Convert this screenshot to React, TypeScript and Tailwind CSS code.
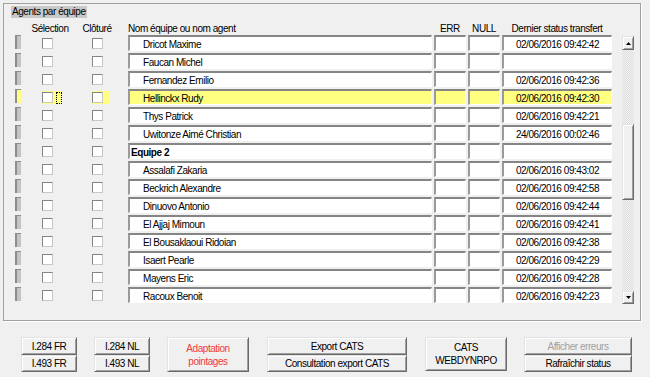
const rows: { name: string; date: string; team?: boolean; selected?: boolean }[] = [
  { name: "Dricot Maxime", date: "02/06/2016 09:42:42" },
  { name: "Faucan Michel", date: "" },
  { name: "Fernandez Emilio", date: "02/06/2016 09:42:36" },
  { name: "Hellinckx Rudy", date: "02/06/2016 09:42:30", selected: true },
  { name: "Thys Patrick", date: "02/06/2016 09:42:21" },
  { name: "Uwitonze Aimé Christian", date: "24/06/2016 00:02:46" },
  { name: "Equipe 2", date: "", team: true },
  { name: "Assalafi Zakaria", date: "02/06/2016 09:43:02" },
  { name: "Beckrich Alexandre", date: "02/06/2016 09:42:58" },
  { name: "Dinuovo Antonio", date: "02/06/2016 09:42:44" },
  { name: "El Ajjaj Mimoun", date: "02/06/2016 09:42:41" },
  { name: "El Bousaklaoui Ridoian", date: "02/06/2016 09:42:38" },
  { name: "Isaert Pearle", date: "02/06/2016 09:42:29" },
  { name: "Mayens Eric", date: "02/06/2016 09:42:28" },
  { name: "Racoux Benoit", date: "02/06/2016 09:42:23" },
];

const sunken =
  "h-[16px] pt-[1px] border-t-2 border-l-2 border-t-[#858585] border-l-[#9a9a9a] border-b border-r border-b-white border-r-white flex items-center";
const raised =
  "border border-t-[#e3e3e3] border-l-[#e3e3e3] border-b-[#696969] border-r-[#696969] shadow-[inset_1px_1px_0_#ffffff,inset_-1px_-1px_0_#a0a0a0] bg-[#f0f0f0]";

function Checkbox() {
  return (
    <div className="w-[11px] h-[11px] bg-white border border-t-[#858585] border-l-[#858585] border-b-[#c8c8c8] border-r-[#c8c8c8]" />
  );
}

function Row({ name, date, team, selected }: (typeof rows)[number]) {
  const fill = selected ? "bg-[#ffff80]" : "bg-white";
  return (
    <div className="flex h-[18px]">
      <div
        className={`ml-[11px] w-[6px] h-[14px] border-l-2 border-t border-[#8c8c8c] ${
          selected ? "bg-[#ffff80]" : "bg-[#c4c4c4]"
        }`}
      />
      <div className={`ml-[21px] mt-[2px] w-[20px] h-[13px] flex items-center ${selected ? "bg-[#ffff80]" : ""}`}>
        <Checkbox />
        {selected && <div className="ml-[3px] w-[6px] h-[12px] border border-dotted border-black" />}
      </div>
      <div className={`ml-[30px] mt-[2px] w-[18px] h-[13px] flex items-center ${selected ? "bg-[#ffff80]" : ""}`}>
        <Checkbox />
      </div>
      <div className={`ml-[18px] w-[304px] ${sunken} ${fill}`}>
        <span className={team ? "pl-[1px] font-bold" : "pl-[13px]"}>{name}</span>
      </div>
      <div className={`ml-[2px] w-[32px] ${sunken} ${fill}`} />
      <div className={`ml-[2px] w-[32px] ${sunken} ${fill}`} />
      <div className={`ml-[2px] w-[110px] justify-center ${sunken} ${fill}`}>{date}</div>
    </div>
  );
}

function Arrow({ down }: { down?: boolean }) {
  return (
    <svg width="5" height="3" viewBox="0 0 5 3" className={down ? "rotate-180" : ""}>
      <path d="M2.5 0 L5 3 L0 3 Z" fill="#000" />
    </svg>
  );
}

function Scrollbar() {
  return (
    <div className="ml-[10px] mt-[1px] w-[12px] h-[268px] flex flex-col">
      <div className={`h-[14px] flex items-center justify-center ${raised}`}>
        <Arrow />
      </div>
      <div className="flex-1 flex flex-col bg-[repeating-conic-gradient(#f4f4f4_0%_25%,#dcdcdc_0%_50%)] bg-[length:2px_2px]">
        <div className="h-[74px]" />
        <div className={`h-[76px] ${raised}`} />
      </div>
      <div className={`h-[13px] flex items-center justify-center ${raised}`}>
        <Arrow down />
      </div>
    </div>
  );
}

function Btn({ className, children }: { className?: string; children: React.ReactNode }) {
  return (
    <div className={`flex items-center justify-center text-center leading-[13px] ${raised} ${className ?? ""}`}>
      {children}
    </div>
  );
}

export default function App() {
  return (
    <div className="w-[650px] h-[377px] bg-[#f0f0f0] text-black text-[10px] tracking-[-0.45px] font-['Liberation_Sans',Arial,sans-serif] overflow-hidden pt-[3px]">
      <div className="ml-[3px] w-[638px] h-[318px] border border-[#a0a0a0] shadow-[1px_1px_0_#ffffff]">
        <div className="ml-[7px] mt-[2px] w-fit h-[12px] leading-[12px] px-[1px] bg-[#c9c9c9]">Agents par équipe</div>
        <div className="mt-[5px] h-[12px] leading-[12px] flex whitespace-nowrap">
          <div className="ml-[26px] w-[40px] text-center">Sélection</div>
          <div className="ml-[12px] w-[30px] text-center">Clôturé</div>
          <div className="ml-[16px] w-[304px]">Nom équipe ou nom agent</div>
          <div className="ml-[2px] w-[32px] text-center">ERR</div>
          <div className="ml-[2px] w-[32px] text-center">NULL</div>
          <div className="ml-[2px] w-[110px] text-center">Dernier status transfert</div>
        </div>
        <div className="flex">
          <div className="flex flex-col">
            {rows.map((r) => (
              <Row key={r.name} {...r} />
            ))}
          </div>
          <Scrollbar />
        </div>
      </div>

      <div className="mt-[16px] pl-[21px] flex items-start">
        <div className="w-[56px] flex flex-col">
          <Btn className="h-[18px]">I.284 FR</Btn>
          <Btn className="h-[17px]">I.493 FR</Btn>
        </div>
        <div className="ml-[17px] w-[56px] flex flex-col">
          <Btn className="h-[18px]">I.284 NL</Btn>
          <Btn className="h-[17px]">I.493 NL</Btn>
        </div>
        <Btn className="ml-[17px] w-[82px] h-[35px] text-[#f03a3a]">
          Adaptation
          <br />
          pointages
        </Btn>
        <div className="ml-[18px] w-[140px] flex flex-col">
          <Btn className="h-[18px]">Export CATS</Btn>
          <Btn className="h-[17px]">Consultation export CATS</Btn>
        </div>
        <Btn className="ml-[18px] w-[82px] h-[34px]">
          CATS
          <br />
          WEBDYNRPO
        </Btn>
        <div className="ml-[17px] w-[108px] flex flex-col">
          <Btn className="h-[18px] text-[#a0a0a0]">Afficher erreurs</Btn>
          <Btn className="h-[17px]">Rafraîchir status</Btn>
        </div>
      </div>
    </div>
  );
}
